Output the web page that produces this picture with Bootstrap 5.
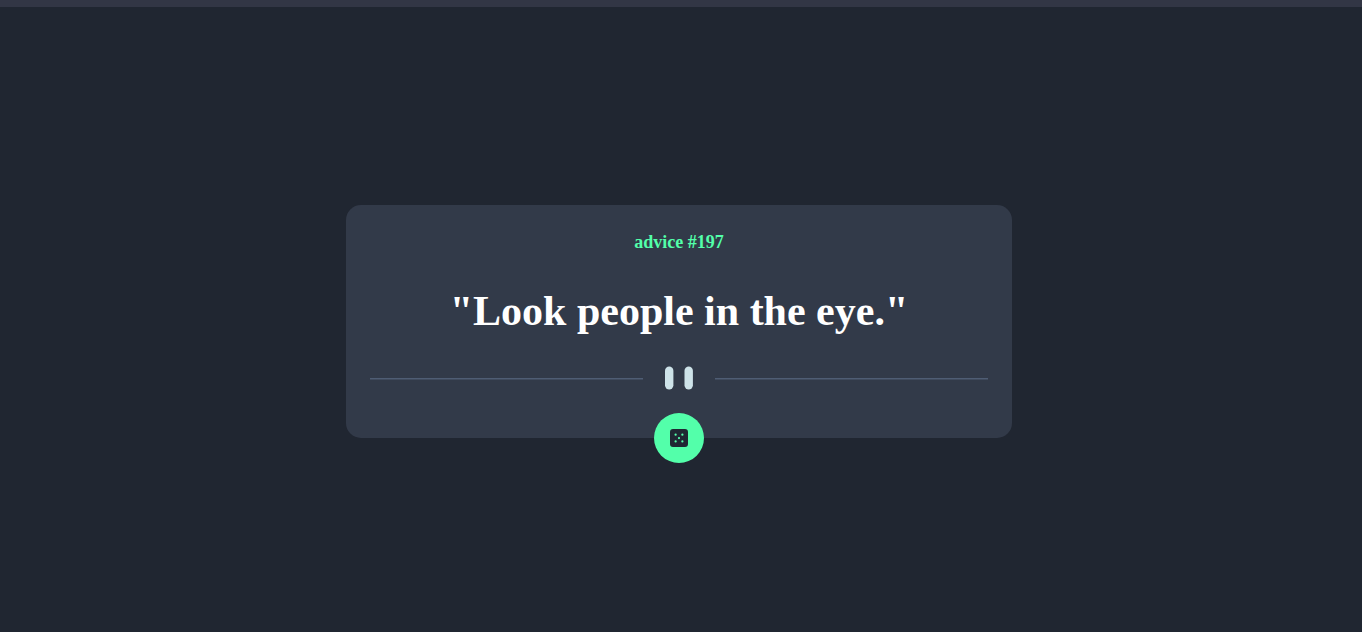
<!DOCTYPE html>
<html lang="en">
<head>
<meta charset="utf-8">
<meta name="viewport" content="width=device-width, initial-scale=1">
<title>Advice generator</title>
<link rel="stylesheet" href="https://cdn.jsdelivr.net/npm/bootstrap@5.3.0/dist/css/bootstrap.min.css">
<style>
  body { background: #202631; font-family: "Liberation Serif", serif; border-top: 7px solid #323645; }
  .stage { padding: 4px 20px 0 16px; }
  .advice-card { max-width: 666px; background: #323a49; border-radius: 15px; padding: 24px 24px 48px; }
  .advice-id { color: #53ffaa; font-size: 18px; line-height: 27px; margin-bottom: 28px; }
  .advice-text { color: #fff; font-size: 42px; line-height: 54px; margin-bottom: 28px; }
  .divider { height: 24px; }
  .dice-btn { width: 50px; height: 50px; background: #53ffaa; }
</style>
</head>
<body class="min-vh-100 d-flex flex-column">
<main class="stage flex-grow-1 d-flex align-items-center justify-content-center">
  <section class="advice-card position-relative w-100 text-center">
    <h1 class="advice-id fw-bold">advice #197</h1>
    <p class="advice-text fw-bold">"Look people in the eye."</p>
    <div class="divider d-flex align-items-center">
      <svg class="w-100" height="24" viewBox="0 0 618 24" aria-hidden="true">
        <path fill="#4f5d74" d="M0 12h273v1.4H0zM345 12h273v1.4H345z"/>
        <g fill="#cee3e9"><rect x="295" y="0.5" width="8.4" height="23" rx="4.2"/><rect x="314.500" y="0.5" width="8.4" height="23" rx="4.2"/></g>
      </svg>
    </div>
    <button type="button" aria-label="New advice" class="dice-btn btn border-0 rounded-circle p-0 d-flex align-items-center justify-content-center position-absolute top-100 start-50 translate-middle">
      <svg width="18" height="18" viewBox="0 0 24 24" aria-hidden="true"><path fill="#202733" d="M20 0H4a4.005 4.005 0 0 0-4 4v16a4.005 4.005 0 0 0 4 4h16a4.005 4.005 0 0 0 4-4V4a4.005 4.005 0 0 0-4-4ZM7.500 18a1.500 1.500 0 1 1 0-3 1.500 1.500 0 0 1 0 3Zm0-9a1.500 1.500 0 1 1 0-3 1.500 1.500 0 0 1 0 3Zm4.500 4.500a1.500 1.500 0 1 1 0-3 1.500 1.500 0 0 1 0 3Zm4.500 4.500a1.500 1.500 0 1 1 0-3 1.500 1.500 0 0 1 0 3Zm0-9a1.500 1.500 0 1 1 0-3 1.500 1.500 0 0 1 0 3Z"/></svg>
    </button>
  </section>
</main>
<script src="https://cdn.jsdelivr.net/npm/bootstrap@5.3.0/dist/js/bootstrap.bundle.min.js"></script>
</body>
</html>
